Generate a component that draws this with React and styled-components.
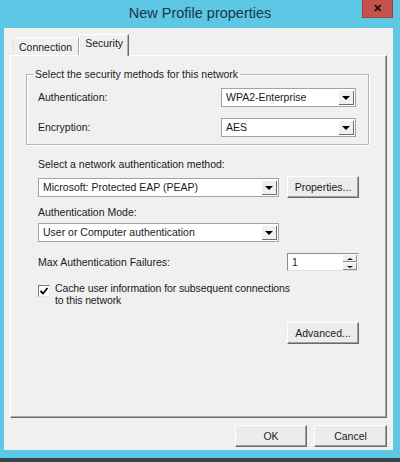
import React from "react";
import styled, { createGlobalStyle } from "styled-components";

const Global = createGlobalStyle`
  html, body { margin: 0; padding: 0; }
  body {
    font-family: "Liberation Sans", Arial, sans-serif;
    font-size: 10.5px;
    color: #1a1a1a;
  }
`;

export default function App() {
  return (
    <>
      <Global />
      <Frame>
        <TitleBar>
          <Title>New Profile properties</Title>
          <Close>✕</Close>
        </TitleBar>
        <Client>
          <TabStrip>
            <Tab>Connection</Tab>
            <Tab $active>Security</Tab>
          </TabStrip>
          <TabPage>
            <Group>
              <Legend>Select the security methods for this network</Legend>
              <GroupGrid>
                <Label>Authentication:</Label>
                <Combo value="WPA2-Enterprise" />
                <Label>Encryption:</Label>
                <Combo value="AES" />
              </GroupGrid>
            </Group>
            <Body>
              <Row $mt={13}>
                <Label $span>Select a network authentication method:</Label>
              </Row>
              <Row $mt={5}>
                <Combo value="Microsoft: Protected EAP (PEAP)" />
                <Button>Properties...</Button>
              </Row>
              <Row $mt={8}>
                <Label $span>Authentication Mode:</Label>
              </Row>
              <Row $mt={4}>
                <Combo value="User or Computer authentication" />
              </Row>
              <Row $mt={11}>
                <Label>Max Authentication Failures:</Label>
                <Spinner value="1" />
              </Row>
              <Row $mt={11}>
                <CheckRow>
                  <CheckBox>
                    <svg width="10" height="10" viewBox="0 0 10 10">
                      <polyline points="1.5,5 4,7.5 8.5,2" fill="none" stroke="#000" strokeWidth="1.8" />
                    </svg>
                  </CheckBox>
                  <CheckText>
                    Cache user information for subsequent connections
                    <br />
                    to this network
                  </CheckText>
                </CheckRow>
              </Row>
              <Row $mt={16}>
                <span />
                <Button>Advanced...</Button>
              </Row>
            </Body>
          </TabPage>
          <Footer>
            <Button $w={72}>OK</Button>
            <Button $w={73}>Cancel</Button>
          </Footer>
        </Client>
        <BottomEdge />
      </Frame>
    </>
  );
}

function Combo({ value }) {
  return (
    <ComboBox>
      <ComboText>{value}</ComboText>
      <DropButton>
        <Arrow />
      </DropButton>
    </ComboBox>
  );
}

function Spinner({ value }) {
  return (
    <SpinBox>
      <ComboText>{value}</ComboText>
      <SpinButtons>
        <SpinHalf>
          <Arrow $up $small />
        </SpinHalf>
        <SpinHalf>
          <Arrow $small />
        </SpinHalf>
      </SpinButtons>
    </SpinBox>
  );
}

const Frame = styled.div`
  width: 400px;
  height: 462px;
  background: #5dc7e6;
  display: flex;
  flex-direction: column;
  overflow: hidden;
`;

const TitleBar = styled.div`
  height: 28px;
  display: grid;
  grid-template-columns: 1fr auto 1fr;
  flex: none;
`;

const Title = styled.div`
  grid-column: 2;
  align-self: center;
  font-size: 14.5px;
  color: #1b3644;
  margin-top: -2px;
`;

const Close = styled.div`
  grid-column: 3;
  justify-self: end;
  align-self: start;
  width: 31px;
  height: 18px;
  margin-right: 7px;
  background: #c6504b;
  border: 1px solid #a5413c;
  border-top: none;
  box-sizing: border-box;
  color: #111;
  font-weight: bold;
  font-size: 11px;
  display: flex;
  align-items: center;
  justify-content: center;
`;

const Client = styled.div`
  height: 422px;
  flex: none;
  margin: 0 7px 0 4px;
  background: #f0f0f0;
  box-sizing: border-box;
  padding: 6px 6px 3px 6px;
  display: flex;
  flex-direction: column;
`;

const TabStrip = styled.div`
  height: 21px;
  display: flex;
  align-items: flex-end;
  padding-left: 3px;
  flex: none;
`;

const Tab = styled.div`
  box-sizing: border-box;
  height: ${(p) => (p.$active ? "22px" : "18px")};
  padding: ${(p) => (p.$active ? "2px 5px 0 5px" : "3px 6px 0 5px")};
  background: #f0f0f0;
  border-top: 1px solid #fff;
  border-left: 1px solid ${(p) => (p.$active ? "#fff" : "#e4e4e4")};
  border-right: 1px solid ${(p) => (p.$active ? "#6a6a6a" : "#a8a8a8")};
  box-shadow: ${(p) => (p.$active ? "inset -1px 0 #b0b0b0" : "none")};
  margin-bottom: ${(p) => (p.$active ? "-1px" : "0")};
  position: relative;
  z-index: ${(p) => (p.$active ? 1 : 0)};
  line-height: 13px;
`;

const TabPage = styled.div`
  flex: 1;
  box-sizing: border-box;
  border: 1px solid;
  border-color: #fff #6a6a6a #6a6a6a #fff;
  box-shadow: inset -1px -1px #a8a8a8, 0 -1px 0 #d8d8d8 inset;
  padding: 12px 17px 0 15px;
  display: flex;
  flex-direction: column;
`;

const Group = styled.fieldset`
  margin: 0;
  padding: 0 12px 7px 11px;
  border: 1px solid #b4b4b4;
  box-shadow: 1px 1px 0 #fff, inset 1px 1px 0 #fff;
`;

const Legend = styled.legend`
  margin-left: -5px;
  padding: 0 2px;
  line-height: 12px;
`;

const GroupGrid = styled.div`
  display: grid;
  grid-template-columns: 1fr 135px;
  row-gap: 11px;
  align-items: center;
  padding-top: 8px;
`;

const Label = styled.div`
  line-height: 13px;
  white-space: nowrap;
  grid-column: ${(p) => (p.$span ? "1 / -1" : "auto")};
`;

const Body = styled.div`
  padding-left: 12px;
  display: flex;
  flex-direction: column;
`;

const Row = styled.div`
  display: grid;
  grid-template-columns: 241px 72px;
  column-gap: 8px;
  align-items: center;
  margin-top: ${(p) => p.$mt}px;
`;

const ComboBox = styled.div`
  height: 19px;
  box-sizing: border-box;
  background: #fff;
  border: 1px solid #a3a3a3;
  display: flex;
  align-items: stretch;
`;

const ComboText = styled.div`
  flex: 1;
  padding-left: 4px;
  line-height: 17px;
  white-space: nowrap;
  overflow: hidden;
`;

const DropButton = styled.div`
  width: 15px;
  margin: 1px;
  background: #f0f0f0;
  border-left: 1px solid #fff;
  border-top: 1px solid #fff;
  box-shadow: inset -1px -1px #6e6e6e;
  display: flex;
  align-items: center;
  justify-content: center;
`;

const Arrow = styled.span`
  width: 0;
  height: 0;
  border-left: ${(p) => (p.$small ? 3 : 4)}px solid transparent;
  border-right: ${(p) => (p.$small ? 3 : 4)}px solid transparent;
  border-top: ${(p) => (p.$up ? "none" : `${p.$small ? 2 : 4}px solid #000`)};
  border-bottom: ${(p) => (p.$up ? `${p.$small ? 2 : 4}px solid #000` : "none")};
  margin-right: 1px;
`;

const SpinBox = styled(ComboBox)`
  height: 18px;
  border-color: #8c8c8c #e0e0e0 #e0e0e0 #8c8c8c;
`;

const SpinButtons = styled.div`
  width: 15px;
  display: flex;
  flex-direction: column;
  margin: 0 1px 0 0;
`;

const SpinHalf = styled.div`
  flex: 1;
  background: #f0f0f0;
  border-left: 1px solid #fff;
  border-top: 1px solid #fff;
  box-shadow: inset -1px -1px #8a8a8a;
  display: flex;
  align-items: center;
  justify-content: center;
`;

const Button = styled.div`
  width: ${(p) => (p.$w ? `${p.$w}px` : "auto")};
  height: 22px;
  box-sizing: border-box;
  background: #ececec;
  border: 1px solid;
  border-color: #fff #6a6a6a #6a6a6a #fff;
  box-shadow: inset -1px -1px #a0a0a0;
  display: flex;
  align-items: center;
  justify-content: center;
  white-space: nowrap;
`;

const CheckRow = styled.div`
  grid-column: 1 / -1;
  display: flex;
  align-items: flex-start;
  gap: 5px;
`;

const CheckBox = styled.div`
  width: 12px;
  height: 12px;
  margin-top: 3px;
  flex: none;
  box-sizing: border-box;
  background: #fff;
  border: 1px solid;
  border-color: #7a7a7a #e8e8e8 #e8e8e8 #7a7a7a;
  display: flex;
  align-items: center;
  justify-content: center;
`;

const CheckText = styled.div`
  line-height: 12px;
  white-space: nowrap;
  letter-spacing: -0.1px;
`;

const Footer = styled.div`
  flex: none;
  display: flex;
  justify-content: flex-end;
  gap: 7px;
  padding-top: 7px;
`;

const BottomEdge = styled.div`
  flex: none;
  margin-top: 8px;
  height: 4px;
  background: #33434b;
`;
